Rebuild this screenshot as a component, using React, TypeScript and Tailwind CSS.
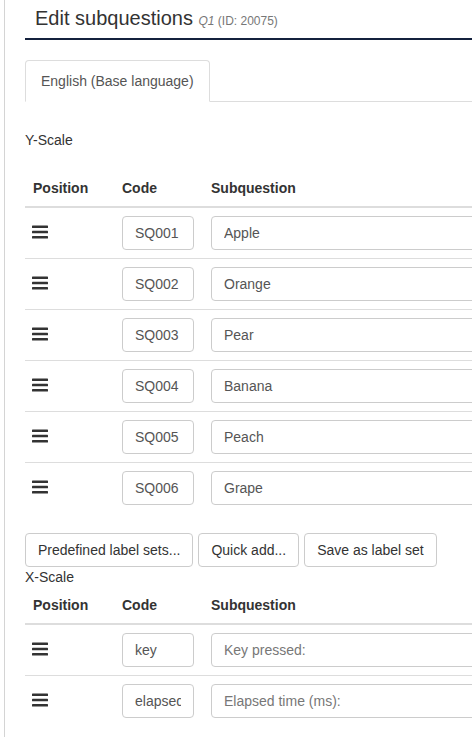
import React from 'react';

type Row = { code: string; text: string; muted?: boolean };

const yScale: Row[] = [
  { code: 'SQ001', text: 'Apple' },
  { code: 'SQ002', text: 'Orange' },
  { code: 'SQ003', text: 'Pear' },
  { code: 'SQ004', text: 'Banana' },
  { code: 'SQ005', text: 'Peach' },
  { code: 'SQ006', text: 'Grape' },
];

const xScale: Row[] = [
  { code: 'key', text: 'Key pressed:', muted: true },
  { code: 'elapsed', text: 'Elapsed time (ms):', muted: true },
];

const Bars = () => (
  <svg width="16" height="14" viewBox="0 0 16 14" className="block">
    <rect x="0" y="0.5" width="16" height="2.6" rx="0.6" fill="#333" />
    <rect x="0" y="5.7" width="16" height="2.6" rx="0.6" fill="#333" />
    <rect x="0" y="10.9" width="16" height="2.6" rx="0.6" fill="#333" />
  </svg>
);

const inputCls =
  'h-[34px] border border-[#ccc] rounded-[4px] px-[12px] text-[14px] text-[#555] bg-white outline-none';

const SubTable = ({ rows }: { rows: Row[] }) => (
  <div className="w-[620px]">
    <div className="grid grid-cols-[89px_89px_1fr] border-b-2 border-[#ddd] font-bold text-[#333]">
      <div className="p-[8px]">Position</div>
      <div className="p-[8px]">Code</div>
      <div className="p-[8px]">Subquestion</div>
    </div>
    {rows.map((r, i) => (
      <div
        key={r.code}
        className={`grid grid-cols-[89px_89px_1fr] items-center ${i > 0 ? 'border-t border-[#ddd]' : ''}`}
      >
        <div className="p-[8px] pl-[7px] -mt-[2px]">
          <Bars />
        </div>
        <div className="p-[8px]">
          <input readOnly value={r.code} className={`${inputCls} w-[72px]`} />
        </div>
        <div className="p-[8px]">
          <input
            readOnly
            value={r.text}
            className={`${inputCls} w-full ${r.muted ? 'text-[#777]' : ''}`}
          />
        </div>
      </div>
    ))}
  </div>
);

const Btn = ({ children }: { children: React.ReactNode }) => (
  <button className="h-[34px] px-[12px] border border-[#ccc] rounded-[4px] bg-white text-[#333] text-[14px] leading-[20px]">
    {children}
  </button>
);

export default function App() {
  return (
    <div className="w-[472px] h-[737px] overflow-hidden bg-white font-['Liberation_Sans',Arial,sans-serif] text-[14px] leading-[20px] text-[#333]">
      <div className="ml-[4px] border-l border-[#d4d4d4] min-h-[737px] pl-[20px]">
        {/* Header */}
        <div className="w-[600px] border-b-2 border-[#14213d] pl-[10px] pt-[4px] pb-[6px]">
          <h1 className="text-[20px] leading-[28px] text-[#333]">
            Edit subquestions{' '}
            <span className="text-[12px] leading-none text-[#777]">
              <i>Q1</i> (ID: 20075)
            </span>
          </h1>
        </div>

        {/* Language tab */}
        <div className="mt-[20px] w-[600px] flex border-b border-[#ddd]">
          <div className="-mb-px px-[15px] py-[10px] border border-[#ddd] border-b-transparent rounded-t-[4px] bg-white text-[#555]">
            English (Base language)
          </div>
        </div>

        <div className="mt-[28px]">Y-Scale</div>

        <div className="mt-[20px]">
          <SubTable rows={yScale} />
        </div>

        <div className="mt-[20px] flex gap-[5px]">
          <Btn>Predefined label sets...</Btn>
          <Btn>Quick add...</Btn>
          <Btn>Save as label set</Btn>
        </div>

        <div>X-Scale</div>

        <SubTable rows={xScale} />
      </div>
    </div>
  );
}
